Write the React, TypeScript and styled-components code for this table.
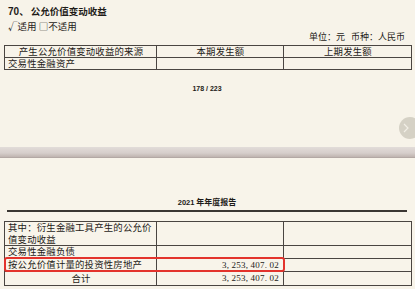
import React from "react";
import styled, { createGlobalStyle } from "styled-components";

const Global = createGlobalStyle`
  html, body { margin: 0; padding: 0; background: #f7f3e9; }
  body { width: 415px; height: 289px; overflow: hidden; font-family: "Noto Sans CJK SC", "Liberation Serif", serif; color: #1e1b18; }
`;

const Viewer = styled.div`
  position: relative;
  width: 415px;
  height: 289px;
  overflow: hidden;
  background: #f7f3e9;
`;

const Page = styled.section`
  display: flex;
  flex-direction: column;
`;

const Title = styled.div`
  margin: 4px 0 0 8px;
  font-size: 9.5px;
  font-weight: 700;
  line-height: 14px;
  span { font-family: "Liberation Sans", Arial, sans-serif; font-size: 10px; }
`;

const Applicable = styled.div`
  margin: 2px 0 0 8px;
  font-size: 9.5px;
  line-height: 10px;
`;

const Unit = styled.div`
  align-self: flex-end;
  margin: 0 10px 0 0;
  font-size: 9px;
  line-height: 11px;
  word-spacing: 4px;
`;

const Table = styled.table<{ $top: number; $line: number }>`
  margin: ${(p) => p.$top}px 0 0 4px;
  width: 408px;
  border-collapse: collapse;
  table-layout: fixed;
  font-size: 9.4px;
  letter-spacing: 0.2px;
  line-height: ${(p) => p.$line}px;
`;

const Cell = styled.td<{ $align?: "left" | "center" | "right" }>`
  border: 1px solid #4a4541;
  padding: 0 2px 0 3px;
  text-align: ${(p) => p.$align ?? "left"};
  vertical-align: middle;
`;

const Num = styled.span`
  font-family: "Liberation Serif", "Times New Roman", serif;
  font-size: 9px;
  padding-right: 2px;
`;

const PageNo = styled.div`
  margin-top: 14px;
  text-align: center;
  font-family: "Liberation Sans", Arial, sans-serif;
  font-weight: 700;
  font-size: 7px;
  line-height: 9px;
  padding-right: 1px;
`;

const Divider = styled.div`
  margin-top: 54px;
  height: 10px;
  background: linear-gradient(#e2dcd9, #d6cecb 60%, #bfb4b0);
  border-bottom: 1px solid #b3a8a4;
`;

const NextButton = styled.div`
  position: absolute;
  left: 399px;
  top: 117px;
  width: 22px;
  height: 22px;
  border-radius: 50%;
  background: #d5d1c5;
  display: flex;
  align-items: center;
  justify-content: center;
  svg { margin-left: -8px; }
`;

const Page2 = styled.section`
  display: flex;
  flex-direction: column;
  background: #f8f4ea;
`;

const ReportHeader = styled.div`
  margin: 39px 8px 0 7px;
  padding-bottom: 2px;
  border-bottom: 2px solid #3b3733;
  text-align: center;
  font-size: 8px;
  font-weight: 700;
  line-height: 10px;
  span { font-family: "Liberation Sans", Arial, sans-serif; font-size: 7.5px; }
`;

const TableWrap = styled.div`
  position: relative;
`;

const Highlight = styled.div`
  position: absolute;
  left: 4px;
  top: 45px;
  width: 277px;
  height: 11px;
  border: 2px solid #e3332c;
  border-radius: 3px;
  pointer-events: none;
`;

const cols = (
  <colgroup>
    <col style={{ width: 152 }} />
    <col style={{ width: 127 }} />
    <col style={{ width: 128 }} />
  </colgroup>
);

export default function App() {
  return (
    <Viewer>
      <Global />
      <Page>
        <Title><span>70</span>、 公允价值变动收益</Title>
        <Applicable>√适用 □不适用</Applicable>
        <Unit>单位：元 币种：人民币</Unit>
        <Table $top={3} $line={11}>
          {cols}
          <tbody>
            <tr>
              <Cell $align="center">产生公允价值变动收益的来源</Cell>
              <Cell $align="center">本期发生额</Cell>
              <Cell $align="center">上期发生额</Cell>
            </tr>
            <tr>
              <Cell>交易性金融资产</Cell>
              <Cell />
              <Cell />
            </tr>
          </tbody>
        </Table>
        <PageNo>178 / 223</PageNo>
        <Divider />
      </Page>
      <NextButton>
        <svg width="8" height="10" viewBox="0 0 8 10">
          <path d="M2 1 L6 5 L2 9" fill="none" stroke="#f2efe6" strokeWidth="1.2" />
        </svg>
      </NextButton>
      <Page2>
        <ReportHeader>
          <span>2021</span> 年年度报告
        </ReportHeader>
        <TableWrap>
          <Table $top={9} $line={11.5}>
            {cols}
            <tbody>
              <tr>
                <Cell>其中：衍生金融工具产生的公允价值变动收益</Cell>
                <Cell />
                <Cell />
              </tr>
              <tr>
                <Cell>交易性金融负债</Cell>
                <Cell />
                <Cell />
              </tr>
              <tr>
                <Cell>按公允价值计量的投资性房地产</Cell>
                <Cell $align="right"><Num>3, 253, 407. 02</Num></Cell>
                <Cell />
              </tr>
              <tr>
                <Cell $align="center">合计</Cell>
                <Cell $align="right"><Num>3, 253, 407. 02</Num></Cell>
                <Cell />
              </tr>
            </tbody>
          </Table>
          <Highlight />
        </TableWrap>
      </Page2>
    </Viewer>
  );
}
